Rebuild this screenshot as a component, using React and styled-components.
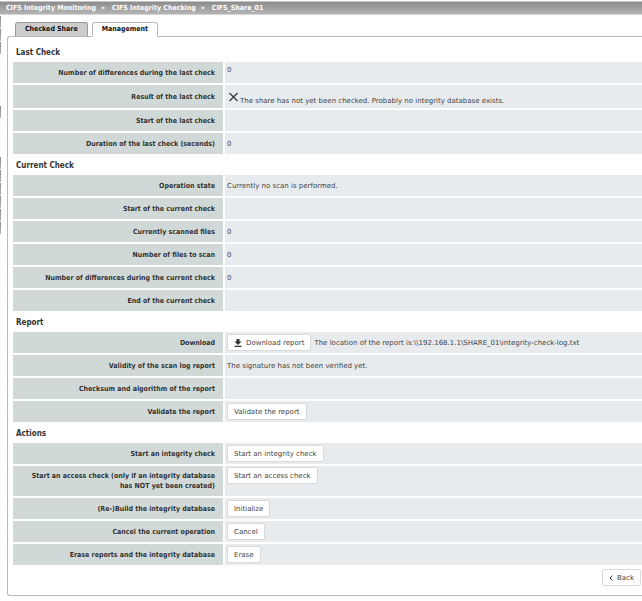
import React from 'react';
import styled, { createGlobalStyle } from 'styled-components';

const GlobalStyle = createGlobalStyle`
  body {
    margin: 0;
    background: #fff;
    color: #444;
    font: 7px/10px "DejaVu Sans", Verdana, sans-serif;
    overflow-x: hidden;
  }
`;

const Page = styled.div`
  display: flex;
  flex-direction: column;
  padding-top: 1px;
`;

const Breadcrumb = styled.nav`
  display: flex;
  align-items: center;
  height: 12px;
  padding: 0 6px;
  border-top: 1px solid #c4c4c4;
  border-bottom: 1px solid #d6d6d6;
  background: linear-gradient(#8c8c8c, #b4b4b4);
  color: #fff;
  font: bold 7px/12px "DejaVu Sans Condensed", Tahoma, sans-serif;
`;

const Crumb = styled.a`
  color: inherit;
  text-decoration: none;
`;

const Separator = styled.span`
  margin: 0 7px 0 5px;
`;

const Body = styled.div`
  display: flex;
`;

const SideMenu = styled.div`
  flex: none;
  width: 1px;
  margin-right: 6px;
`;

const SideItem = styled.div`
  height: 12px;
  margin-top: ${(props) => props.$gap || 1}px;
  background: linear-gradient(#8c8c8c, #b4b4b4);
`;

const Main = styled.main`
  flex: 1;
  min-width: 0;
`;

const Tabs = styled.div`
  display: flex;
  gap: 4px;
  padding: 7px 0 0 8px;
  margin-bottom: -1px;
`;

const Tab = styled.button`
  position: relative;
  box-sizing: border-box;
  height: 15px;
  margin: 0;
  padding: 0 9px;
  border: 1px solid ${(props) => (props.$active ? '#bbb' : '#999')};
  border-bottom-color: ${(props) => (props.$active ? '#fff' : '#bbb')};
  border-radius: 3px 3px 0 0;
  background: ${(props) => (props.$active ? '#fff' : '#ccc')};
  color: #111;
  font: bold 7px/13px "DejaVu Sans Condensed", Tahoma, sans-serif;
`;

const Panel = styled.div`
  padding: 6px 0 9px 5px;
  border: 1px solid #bbb;
  border-right: 0;
  border-radius: 3px 0 0 3px;
`;

const SectionTitle = styled.h2`
  margin: 0;
  padding-left: 3px;
  color: #333;
  font: bold 8px/19px "DejaVu Sans Condensed", Tahoma, sans-serif;
`;

const Table = styled.table`
  width: 100%;
  border-spacing: 0;
  table-layout: fixed;
`;

const Label = styled.th`
  box-sizing: border-box;
  width: 212px;
  height: ${(props) => props.$height || 23}px;
  padding: 0 8px 0 10px;
  border: solid #fff;
  border-width: 0 2px 2px 0;
  background: #d1d9d8;
  color: #333;
  font: bold 7px/10px "DejaVu Sans Condensed", Tahoma, sans-serif;
  text-align: right;
  vertical-align: middle;
`;

const Value = styled.td`
  padding: 1px 2px;
  border-bottom: 2px solid #fff;
  background: #e7ebee;
  vertical-align: ${(props) => (props.$top ? 'top' : 'middle')};
`;

const Cell = styled.div`
  display: flex;
  align-items: center;
  gap: 3px;
  min-height: 14px;
`;

const Status = styled(Cell)`
  align-items: flex-end;
  gap: 1px;
`;

const Button = styled.button`
  display: inline-flex;
  flex: none;
  align-items: center;
  gap: 4px;
  box-sizing: border-box;
  height: 17px;
  margin: 0;
  padding: 0 6px;
  border: 1px solid #d6dadd;
  border-radius: 2px;
  background: #fff;
  color: #444;
  font: 7px/10px "DejaVu Sans", Verdana, sans-serif;
`;

const Footer = styled.div`
  display: flex;
  justify-content: flex-end;
  padding: 2px 1px 0 0;
`;

const CrossIcon = () => (
  <svg width="12" height="18" viewBox="0 0 12 18" aria-hidden="true">
    <path d="M2.500 5l8 8M10.500 5l-8 8" stroke="#333" strokeWidth="1.200" fill="none" />
  </svg>
);

const DownloadIcon = () => (
  <svg width="8" height="8" viewBox="0 0 8 8" aria-hidden="true">
    <path d="M2.500 0h3v2.600h2L4 6 .500 2.600h2zM.500 6.700h7V8h-7z" fill="#333" />
  </svg>
);

const BackIcon = () => (
  <svg width="4" height="6" viewBox="0 0 4 6" aria-hidden="true">
    <path d="M3.500.500L1 3l2.500 2.500" stroke="#333" fill="none" />
  </svg>
);

const sections = [
  {
    title: 'Last Check',
    rows: [
      { label: 'Number of differences during the last check', value: '0', top: true },
      {
        label: 'Result of the last check',
        value: 'The share has not yet been checked. Probably no integrity database exists.',
        failed: true,
        height: 25,
      },
      { label: 'Start of the last check' },
      { label: 'Duration of the last check (seconds)', value: '0' },
    ],
  },
  {
    title: 'Current Check',
    rows: [
      { label: 'Operation state', value: 'Currently no scan is performed.' },
      { label: 'Start of the current check' },
      { label: 'Currently scanned files', value: '0' },
      { label: 'Number of files to scan', value: '0' },
      { label: 'Number of differences during the current check', value: '0' },
      { label: 'End of the current check' },
    ],
  },
  {
    title: 'Report',
    rows: [
      {
        label: 'Download',
        button: 'Download report',
        buttonIcon: <DownloadIcon />,
        value: 'The location of the report is:\\\\192.168.1.1\\SHARE_01\\integrity-check-log.txt',
      },
      { label: 'Validity of the scan log report', value: 'The signature has not been verified yet.' },
      { label: 'Checksum and algorithm of the report' },
      { label: 'Validate the report', button: 'Validate the report' },
    ],
  },
  {
    title: 'Actions',
    rows: [
      { label: 'Start an integrity check', button: 'Start an integrity check' },
      {
        label: 'Start an access check (only if an integrity database has NOT yet been created)',
        button: 'Start an access check',
        top: true,
        height: 32,
      },
      { label: '(Re-)Build the integrity database', button: 'Initialize' },
      { label: 'Cancel the current operation', button: 'Cancel' },
      { label: 'Erase reports and the integrity database', button: 'Erase' },
    ],
  },
];

const SettingRow = ({ row }) => (
  <tr>
    <Label scope="row" $height={row.height}>{row.label}</Label>
    <Value $top={row.top}>
      {row.failed ? (
        <Status>
          <CrossIcon />
          <span>{row.value}</span>
        </Status>
      ) : (
        <Cell>
          {row.button && (
            <Button type="button">
              {row.buttonIcon}
              {row.button}
            </Button>
          )}
          {row.value && <span>{row.value}</span>}
        </Cell>
      )}
    </Value>
  </tr>
);

const App = () => (
  <Page>
    <GlobalStyle />
    <Breadcrumb aria-label="Breadcrumb">
      <Crumb href="#monitoring">CIFS Integrity Monitoring</Crumb>
      <Separator>»</Separator>
      <Crumb href="#checking">CIFS Integrity Checking</Crumb>
      <Separator>»</Separator>
      <span>CIFS_Share_01</span>
    </Breadcrumb>
    <Body>
      <SideMenu aria-hidden="true">
        <SideItem />
        <SideItem />
        <SideItem />
        <SideItem $gap={52} />
        <SideItem $gap={39} />
        <SideItem />
        <SideItem />
        <SideItem />
        <SideItem />
        <SideItem />
      </SideMenu>
      <Main>
        <Tabs role="tablist">
          <Tab type="button" role="tab" aria-selected="false">Checked Share</Tab>
          <Tab type="button" role="tab" aria-selected="true" $active>Management</Tab>
        </Tabs>
        <Panel>
          {sections.map((section) => (
            <section key={section.title}>
              <SectionTitle>{section.title}</SectionTitle>
              <Table>
                <tbody>
                  {section.rows.map((row) => (
                    <SettingRow key={row.label} row={row} />
                  ))}
                </tbody>
              </Table>
            </section>
          ))}
          <Footer>
            <Button type="button">
              <BackIcon />
              Back
            </Button>
          </Footer>
        </Panel>
      </Main>
    </Body>
  </Page>
);

export default App;
